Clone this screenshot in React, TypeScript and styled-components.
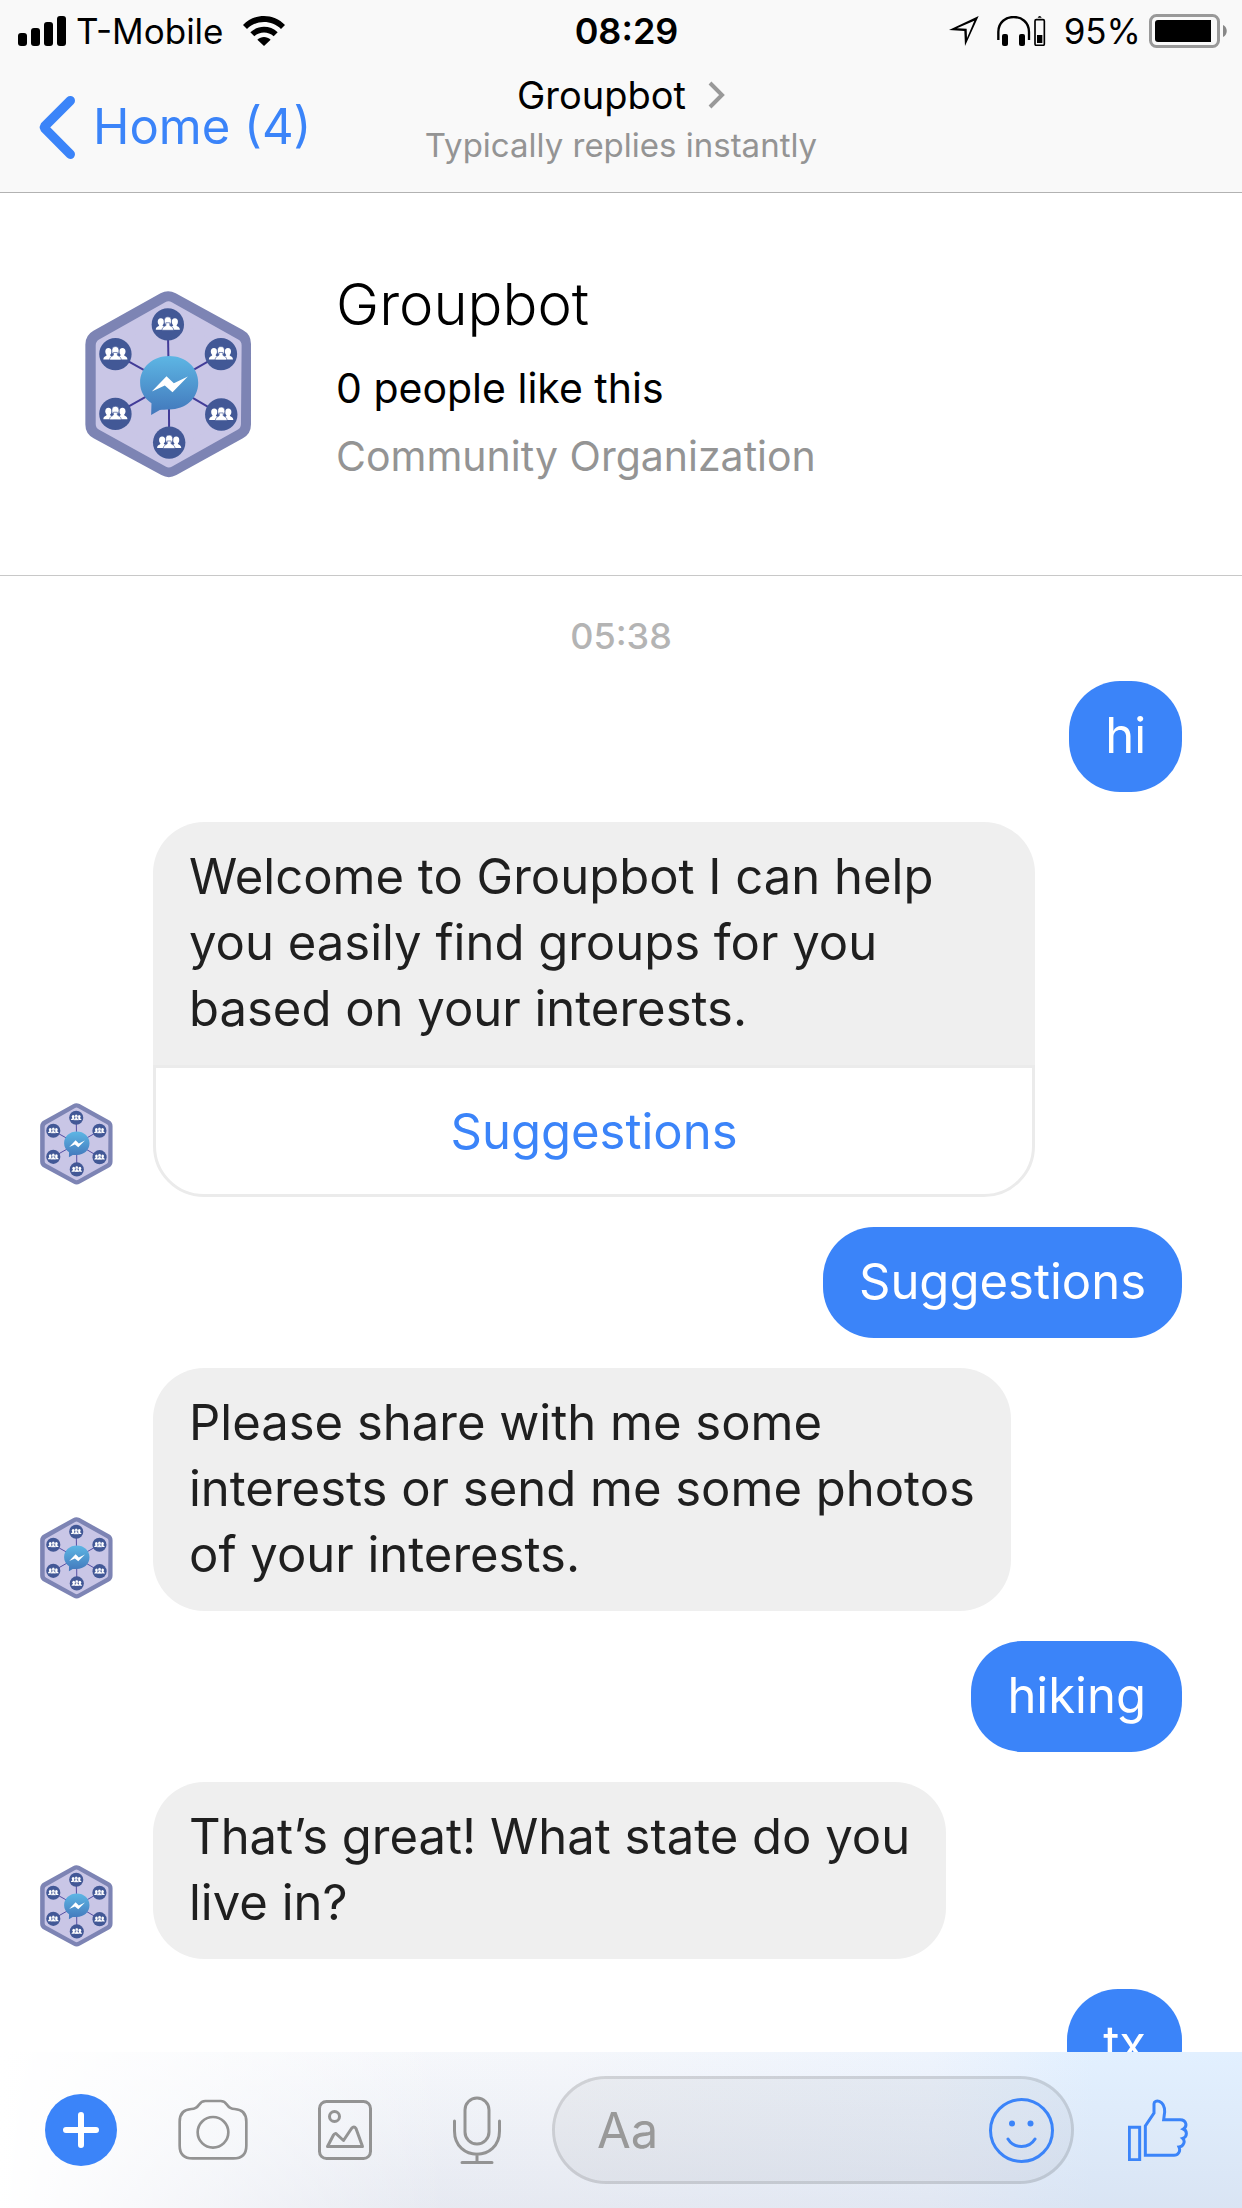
import React from "react";
import styled, { createGlobalStyle } from "styled-components";

const BLUE = "#3b84f9";
const GREY = "#949494";

const GlobalStyle = createGlobalStyle`
  * { box-sizing: border-box; }
  body {
    margin: 0;
    background: #fff;
    color: #000;
    font-family: Inter, "Liberation Sans", sans-serif;
  }
  button {
    font: inherit;
    border: 0;
    padding: 0;
    background: none;
    cursor: pointer;
  }
  svg { display: block; flex: none; }
`;

const Screen = styled.div`
  display: flex;
  flex-direction: column;
  height: 100vh;
  overflow: hidden;
`;

const Header = styled.header`
  flex: none;
  background: #f9f9f9;
  border-bottom: 1px solid #b2b2b2;
`;

const StatusBar = styled.div`
  display: grid;
  grid-template-columns: 1fr auto 1fr;
  align-items: center;
  height: 60px;
  padding: 2px 15px 0 18px;
  font-size: 35px;
  line-height: 40px;
`;

const StatusGroup = styled.div`
  display: flex;
  align-items: center;
  gap: 10px;
`;

const StatusIndicators = styled.div`
  display: flex;
  align-items: center;
  justify-content: flex-end;
  gap: 18px;
`;

const PowerGroup = styled.div`
  display: flex;
  align-items: center;
  gap: 8px;
`;

const Carrier = styled.span`
  padding-right: 9px;
`;

const Clock = styled.time`
  padding-left: 8px;
  font-size: 36px;
  font-weight: 600;
`;

const NavBar = styled.nav`
  display: grid;
  grid-template-columns: 1fr auto 1fr;
  align-items: center;
  height: 132px;
  padding: 2px 38px 0;
`;

const BackButton = styled.button`
  display: flex;
  align-items: center;
  gap: 18px;
  justify-self: start;
  color: ${BLUE};
  font-size: 49px;
  line-height: 66px;
`;

const TitleButton = styled.button`
  display: flex;
  flex-direction: column;
  align-items: center;
  padding-bottom: 14px;
  color: #000;
`;

const TitleLine = styled.span`
  display: flex;
  align-items: center;
  gap: 22px;
  font-size: 38px;
  line-height: 50px;
`;

const Subtitle = styled.span`
  color: ${GREY};
  font-size: 33px;
  line-height: 50px;
`;

const ProfileCard = styled.section`
  display: flex;
  flex: none;
  align-items: center;
  gap: 84px;
  height: 383px;
  padding-left: 85px;
  border-bottom: 1px solid #c8c8c8;
`;

const ProfileInfo = styled.div`
  padding-bottom: 24px;
  font-size: 41px;
  line-height: 68px;
`;

const ProfileName = styled.h1`
  margin: 0;
  font-size: 58px;
  font-weight: 300;
  line-height: 100px;
`;

const ProfileText = styled.p<{ $muted?: boolean }>`
  margin: 0;
  color: ${(p) => (p.$muted ? GREY : "#000")};
`;

const Conversation = styled.main`
  display: flex;
  flex: 1;
  flex-direction: column;
  gap: 30px;
  min-height: 0;
  padding: 45px 60px 0 40px;
  overflow: hidden;
`;

const DayTime = styled.time`
  flex: none;
  align-self: center;
  margin-left: 20px;
  color: #b4b4b4;
  font-size: 36px;
  font-weight: 500;
  line-height: 30px;
`;

const MessageRow = styled.div<{ $own?: boolean }>`
  display: flex;
  flex: none;
  align-items: flex-end;
  justify-content: ${(p) => (p.$own ? "flex-end" : "flex-start")};
  gap: 40px;
`;

const AvatarSlot = styled.div`
  padding-bottom: 12px;
`;

const Bubble = styled.p<{ $own?: boolean }>`
  margin: 0;
  padding: 22px 36px 23px;
  border-radius: 51px;
  background: ${(p) => (p.$own ? BLUE : "#efefef")};
  color: ${(p) => (p.$own ? "#fff" : "#1f1f1f")};
  font-size: 49px;
  line-height: 66px;
  white-space: pre-line;
`;

const TemplateCard = styled.div`
  display: flex;
  flex-direction: column;
  width: 882px;
  max-width: 100%;

  ${Bubble} {
    border-radius: 51px 51px 0 0;
  }
`;

const TemplateAction = styled.button`
  height: 132px;
  padding-top: 2px;
  border: 3px solid #ebebeb;
  border-radius: 0 0 51px 51px;
  background: #fff;
  color: ${BLUE};
  font-size: 49px;
  line-height: 66px;
`;

const Composer = styled.form`
  display: flex;
  flex: none;
  align-items: center;
  height: 156px;
  padding-left: 15px;
  background:
    linear-gradient(to right, #fff 0%, rgba(255, 255, 255, 0) 36%),
    linear-gradient(to bottom, rgba(200, 206, 222, 0), rgba(200, 206, 222, 0.34) 100%),
    linear-gradient(to right, #f8f9fc 0%, #f5f7fb 45%, #eef4fd 75%, #e2f0ff 88%, #e2f0ff 100%);
`;

const ToolButton = styled.button<{ $wide?: boolean }>`
  display: flex;
  flex: none;
  align-items: center;
  justify-content: center;
  width: ${(p) => (p.$wide ? "168px" : "132px")};
  height: 108px;
`;

const InputPill = styled.div`
  display: flex;
  flex: 1;
  align-items: center;
  min-width: 0;
  height: 108px;
  margin-left: 9px;
  padding: 0 17px 0 42px;
  border: 3px solid rgba(0, 0, 0, 0.14);
  border-radius: 54px;
  background: rgba(0, 0, 0, 0.035);
  background-clip: padding-box;
`;

const TextInput = styled.input`
  flex: 1;
  min-width: 0;
  padding: 2px 0 0;
  border: 0;
  outline: 0;
  background: none;
  color: #1f1f1f;
  font: inherit;
  font-size: 49px;
  line-height: 66px;

  &::placeholder {
    color: #999;
    opacity: 1;
  }
`;

const nodes = [
  [323, 162],
  [482, 251],
  [483, 432],
  [327, 516],
  [166, 430],
  [166, 251],
];

function Person({ x, y, s }: { x: number; y: number; s: number }) {
  return (
    <g transform={`translate(${x} ${y}) scale(${s})`}>
      <ellipse cx="0" cy="-9" rx="11" ry="13" />
      <path d="M-6-4H6V4C8 8 17 7 18 19H-18C-17 7-8 8-6 4Z" />
    </g>
  );
}

function GroupLogo({ width, height }: { width: number; height: number }) {
  return (
    <svg width={width} height={height} viewBox="75 62 500 560" role="img" aria-label="Groupbot">
      <defs>
        <linearGradient id="chatFill" x1="0" y1="0" x2="0" y2="1">
          <stop offset="0" stopColor="#5db6e4" />
          <stop offset="1" stopColor="#4277bb" />
        </linearGradient>
      </defs>
      <path
        d="M324 110L525 220V462L326 572L123 462V222Z"
        fill="#7d84b4"
        stroke="#7d84b4"
        strokeWidth="94"
        strokeLinejoin="round"
      />
      <path
        d="M325 113L524 225L522 460L326 570L127 460V225Z"
        fill="#c9c6e6"
        stroke="#c9c6e6"
        strokeWidth="40"
        strokeLinejoin="round"
      />
      <g stroke="#423c98" strokeWidth="6">
        {nodes.map(([x, y]) => (
          <path key={`${x}-${y}`} d={`M326 340L${x} ${y}`} />
        ))}
      </g>
      {nodes.map(([x, y]) => (
        <g key={`${x}-${y}`} fill="#fff">
          <circle cx={x} cy={y} r="48.500" fill="#425896" />
          <Person x={x - 21} y={y} s={0.84} />
          <Person x={x + 21} y={y} s={0.84} />
          <g stroke="#425896" strokeWidth="2">
            <Person x={x} y={y - 1} s={0.98} />
          </g>
        </g>
      ))}
      <path
        d="M327 257C375 257 414 290 414 337C414 384 376 417 327 417C316 417 307 418 299 418L273 433L274 398C253 384 240 363 240 337C240 290 279 257 327 257Z"
        fill="url(#chatFill)"
      />
      <path d="M275 363L319 317L341 338L383 318L337 365L314 345Z" fill="#fff" />
    </svg>
  );
}

function SignalIcon() {
  return (
    <svg width="48" height="30" viewBox="0 0 48 30">
      <rect x="0" y="17" width="9" height="13" rx="3" />
      <rect x="13" y="12" width="9" height="18" rx="3" />
      <rect x="26" y="6" width="9" height="24" rx="3" />
      <rect x="39" y="0" width="9" height="30" rx="3" />
    </svg>
  );
}

function WifiIcon() {
  return (
    <svg width="42" height="30" viewBox="0 0 126 90">
      <path d="M0 27C34-9 92-9 126 27L114 39C86 11 40 11 12 39Z" />
      <path d="M22 49C45 27 81 27 104 49L92 61C75 46 51 46 34 61Z" />
      <path d="M43 71C55 60 71 60 83 71L63 90Z" />
    </svg>
  );
}

function LocationIcon() {
  return (
    <svg width="30" height="30" viewBox="0 0 90 90">
      <path fillRule="evenodd" d="M0 42L89 0L48 90L46 45ZM24 37L53 38L54 66L76 14Z" />
    </svg>
  );
}

function HeadphonesIcon() {
  return (
    <svg width="49" height="30" viewBox="0 0 147 90">
      <path d="M4 72V48C4-12 96-12 96 48V72" fill="none" stroke="#000" strokeWidth="7" />
      <rect x="15" y="54" width="18" height="36" rx="6" />
      <rect x="66" y="54" width="18" height="36" rx="6" />
      <path d="M122 5Q124 0 128 0T134 5Z" />
      <rect x="114" y="11" width="28" height="77" rx="4" fill="none" stroke="#000" strokeWidth="5" />
      <rect x="120" y="57" width="16" height="24" />
    </svg>
  );
}

function BatteryIcon() {
  return (
    <svg width="78" height="34" viewBox="0 0 78 34">
      <rect x="1.500" y="1.500" width="68" height="31" rx="6" fill="none" stroke="#999" strokeWidth="3" />
      <path d="M74 11C79 13 79 21 74 23Z" fill="#888" />
      <path d="M9 6H62V28H9Q6 28 6 25V9Q6 6 9 6Z" />
    </svg>
  );
}

function BackIcon() {
  return (
    <svg width="37" height="63" viewBox="0 0 111 189">
      <path
        d="M97 14L19 92V96L97 175"
        fill="none"
        stroke={BLUE}
        strokeWidth="28"
        strokeLinecap="round"
        strokeLinejoin="bevel"
      />
    </svg>
  );
}

function ForwardIcon() {
  return (
    <svg width="17" height="28" viewBox="0 0 17 28">
      <path d="M2 2L14 14L2 26" fill="none" stroke="#999" strokeWidth="4" />
    </svg>
  );
}

function PlusIcon() {
  return (
    <svg width="72" height="72" viewBox="0 0 72 72">
      <circle cx="36" cy="36" r="36" fill={BLUE} />
      <path d="M36 21V51M21 36H51" stroke="#fff" strokeWidth="6" strokeLinecap="round" />
    </svg>
  );
}

function CameraIcon() {
  return (
    <svg width="70" height="62" viewBox="534 182 210 186" fill="none" stroke="#939393" strokeWidth="8">
      <path d="M574 212C602 212 592 188 616 188H662C686 188 676 212 704 212Q739 214 739 250V322Q739 360 700 360H578Q539 360 539 322V250Q539 214 574 212Z" />
      <circle cx="639" cy="282" r="46" />
    </svg>
  );
}

function PhotoIcon() {
  return (
    <svg width="54" height="60" viewBox="0 0 54 60" fill="none" stroke="#939393" strokeWidth="3" strokeLinejoin="round">
      <rect x="1.500" y="1.500" width="51" height="57" rx="7" />
      <circle cx="16.500" cy="16.500" r="5" />
      <path d="M9.500 46.500L15.500 35Q17 32.500 19 34.500L25.500 40.500L33.500 28.500Q36 25.500 38 28.500L44.500 46.500Z" />
    </svg>
  );
}

function MicIcon() {
  return (
    <svg width="48" height="68" viewBox="0 0 48 68" fill="none" stroke="#939393" strokeWidth="3" strokeLinecap="round">
      <rect x="12" y="2" width="24" height="46" rx="12" />
      <path d="M1.500 25V35C1.500 66 46.500 66 46.500 35V25M24 58V66M9 66.500H39" />
    </svg>
  );
}

function SmileIcon() {
  return (
    <svg width="65" height="65" viewBox="0 0 65 65" fill="none" stroke={BLUE} strokeWidth="3">
      <circle cx="32.500" cy="32.500" r="31" />
      <path d="M19 41C25 51 40 51 46 41" strokeLinecap="round" />
      <g fill={BLUE} stroke="none">
        <circle cx="23" cy="25.500" r="3" />
        <circle cx="41.500" cy="25.500" r="3" />
      </g>
    </svg>
  );
}

function ThumbIcon() {
  return (
    <svg width="60" height="62" viewBox="924 411 180 186" fill="none" stroke={BLUE} strokeWidth="9">
      <path d="M928 496H959V593H928Z" />
      <path d="M976 580V492L1002 453V425C1002 412 1034 412 1034 450L1031 473H1081C1099 473 1103 493 1090 501C1102 506 1103 524 1088 529C1097 537 1091 554 1077 555C1083 568 1074 580 1062 580Z" />
    </svg>
  );
}

type Message = { text: string; own?: boolean; action?: string };

const messages: Message[] = [
  { text: "hi", own: true },
  {
    text: "Welcome to Groupbot I can help\nyou easily find groups for you\nbased on your interests.",
    action: "Suggestions",
  },
  { text: "Suggestions", own: true },
  { text: "Please share with me some\ninterests or send me some photos\nof your interests." },
  { text: "hiking", own: true },
  { text: "That’s great! What state do you\nlive in?" },
  { text: "tx", own: true },
];

function MessageItem({ text, own, action }: Message) {
  if (own) {
    return (
      <MessageRow $own>
        <Bubble $own>{text}</Bubble>
      </MessageRow>
    );
  }
  return (
    <MessageRow>
      <AvatarSlot>
        <GroupLogo width={73} height={82} />
      </AvatarSlot>
      {action ? (
        <TemplateCard>
          <Bubble>{text}</Bubble>
          <TemplateAction type="button">{action}</TemplateAction>
        </TemplateCard>
      ) : (
        <Bubble>{text}</Bubble>
      )}
    </MessageRow>
  );
}

export default function App() {
  return (
    <Screen>
      <GlobalStyle />
      <Header>
        <StatusBar>
          <StatusGroup>
            <SignalIcon />
            <Carrier>T-Mobile</Carrier>
            <WifiIcon />
          </StatusGroup>
          <Clock>08:29</Clock>
          <StatusIndicators>
            <LocationIcon />
            <HeadphonesIcon />
            <PowerGroup>
              <span>95%</span>
              <BatteryIcon />
            </PowerGroup>
          </StatusIndicators>
        </StatusBar>
        <NavBar>
          <BackButton type="button">
            <BackIcon />
            Home (4)
          </BackButton>
          <TitleButton type="button">
            <TitleLine>
              Groupbot
              <ForwardIcon />
            </TitleLine>
            <Subtitle>Typically replies instantly</Subtitle>
          </TitleButton>
        </NavBar>
      </Header>
      <ProfileCard>
        <GroupLogo width={167} height={187} />
        <ProfileInfo>
          <ProfileName>Groupbot</ProfileName>
          <ProfileText>0 people like this</ProfileText>
          <ProfileText $muted>Community Organization</ProfileText>
        </ProfileInfo>
      </ProfileCard>
      <Conversation>
        <DayTime>05:38</DayTime>
        {messages.map((message, index) => (
          <MessageItem key={index} {...message} />
        ))}
      </Conversation>
      <Composer onSubmit={(event) => event.preventDefault()}>
        <ToolButton type="button" aria-label="More">
          <PlusIcon />
        </ToolButton>
        <ToolButton type="button" aria-label="Camera">
          <CameraIcon />
        </ToolButton>
        <ToolButton type="button" aria-label="Photos">
          <PhotoIcon />
        </ToolButton>
        <ToolButton type="button" aria-label="Voice message">
          <MicIcon />
        </ToolButton>
        <InputPill>
          <TextInput type="text" placeholder="Aa" aria-label="Message" />
          <button type="button" aria-label="Emoji">
            <SmileIcon />
          </button>
        </InputPill>
        <ToolButton type="button" aria-label="Like" $wide>
          <ThumbIcon />
        </ToolButton>
      </Composer>
    </Screen>
  );
}
